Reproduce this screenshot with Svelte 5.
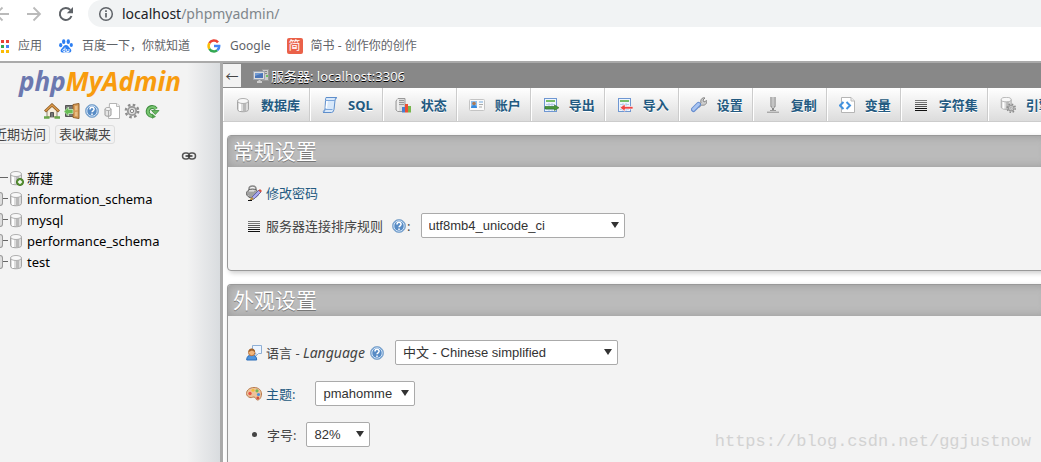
<script>
  const bookmarks = [
    { name: '应用', icon: 'apps' },
    { name: '百度一下，你就知道', icon: 'baidu' },
    { name: 'Google', icon: 'google' },
    { name: '简书 - 创作你的创作', icon: 'jianshu' },
  ];

  const quickLinks = [
    { title: '主页', icon: 'home' },
    { title: '退出', icon: 'exit' },
    { title: 'phpMyAdmin 文档', icon: 'help' },
    { title: '文档', icon: 'docs' },
    { title: '导航面板设置', icon: 'cog' },
    { title: '刷新导航面板', icon: 'reload' },
  ];

  const databases = ['information_schema', 'mysql', 'performance_schema', 'test'];

  const tabs = [
    { name: '数据库', icon: 'db' },
    { name: 'SQL', icon: 'sql' },
    { name: '状态', icon: 'status' },
    { name: '账户', icon: 'users' },
    { name: '导出', icon: 'export' },
    { name: '导入', icon: 'import' },
    { name: '设置', icon: 'wrench' },
    { name: '复制', icon: 'replication' },
    { name: '变量', icon: 'vars' },
    { name: '字符集', icon: 'charset' },
    { name: '引擎', icon: 'engine' },
  ];

  let collation = 'utf8mb4_unicode_ci';
  let language = 'zh_CN';
  let theme = 'pmahomme';
  let fontSize = '82%';
</script>

<svelte:head>
  <title>localhost / phpMyAdmin</title>
</svelte:head>

{#snippet cylinder()}
  <path d="M2.500 4v8.500c0 3 11 3 11 0V4z" fill="#dcdcdc" stroke="#a5a5a5" />
  <path d="M8 6h3v8.500H8z" fill="#b9b9b9" />
  <path d="M4 6h2v8H4z" fill="#fff" />
  <ellipse cx="8" cy="4" rx="5.500" ry="2.500" fill="#f8f8f8" stroke="#b0b0b0" />
{/snippet}

{#snippet gear()}
  <circle cx="8" cy="8" r="6.200" fill="none" stroke="#8c8c8c" stroke-width="2.400" stroke-dasharray="2.500 2.370" />
  <circle cx="8" cy="8" r="4.200" fill="#ddd" stroke="#999" stroke-width="1.800" />
  <circle cx="8" cy="8" r="1.700" fill="#f3f3f3" stroke="#888" />
{/snippet}

{#snippet sheet()}
  <rect x="1.500" y="1.500" width="12" height="13" fill="#eef5fd" stroke="#6f97d2" />
  <path d="M3 4h9" stroke="#75bd68" stroke-width="2" />
  <path d="M3 7.500h9M3 10h9M3 12.500h9M6 6v8M9 6v8" stroke="#b4cbe9" />
{/snippet}

{#snippet icon(name)}
  <svg class="icon" viewBox="0 0 16 16" width="16" height="16" aria-hidden="true">
    {#if name === 'back'}
      <path d="M15 8H2M8.500 1.500 2 8l6.500 6.500" fill="none" stroke="#bababa" stroke-width="1.800" />
    {:else if name === 'forward'}
      <path d="M1 8h13M7.500 1.500 14 8l-6.500 6.500" fill="none" stroke="#bababa" stroke-width="1.800" />
    {:else if name === 'refresh'}
      <path d="M13.500 10A6 6 0 1 1 12.300 3.900" fill="none" stroke="#5f6368" stroke-width="2" />
      <path d="M15 1v6.200H8.800z" fill="#5f6368" />
    {:else if name === 'info'}
      <circle cx="8" cy="8" r="6.300" fill="none" stroke="#5f6368" stroke-width="1.500" />
      <path d="M8 7v4.500M8 4.300V6" stroke="#5f6368" stroke-width="1.700" />
    {:else if name === 'apps'}
      <path d="M2 2h3v3H2zM7 2h3v3H7zM12 2h3v3h-3z" fill="#ea4335" />
      <path d="M2 7h3v3H2zM12 12h3v3h-3zM7 12h3v3H7z" fill="#fbbc05" />
      <path d="M7 7h3v3H7z" fill="#34a853" /><path d="M12 7h3v3h-3z" fill="#4285f4" />
      <path d="M2 12h3v3H2z" fill="#34a853" />
    {:else if name === 'baidu'}
      <g fill="#2d7ff2">
        <ellipse cx="5.700" cy="3.700" rx="1.700" ry="2.400" /><ellipse cx="10.300" cy="3.700" rx="1.700" ry="2.400" />
        <ellipse cx="2.700" cy="7.200" rx="1.600" ry="2.100" /><ellipse cx="13.300" cy="7" rx="1.600" ry="2.100" />
        <path d="M8 7c2 0 2.500 1.800 4 3.200 2.500 2.300 1.200 4.700-1.500 4.300-1.700-.3-3.300-.3-5 0C2.700 14.900 1.500 12.500 4 10.200 5.500 8.800 6 7 8 7z" />
      </g>
      <path d="M7 9.500V13.500H5.500q-1.500-1 0-2.300H7M8.700 11v2.500h2.300V11" fill="none" stroke="#fff" stroke-width=".9" />
    {:else if name === 'google'}
      <g fill="none" stroke-width="2.500">
        <path d="M3.400 5.200A5.200 5.200 0 0 1 12 4.400" stroke="#ea4335" />
        <path d="M3.400 5.200a5.500 5.500 0 0 0 0 5.600" stroke="#fbbc05" />
        <path d="M3.400 10.800a5.300 5.300 0 0 0 7.800 1.500" stroke="#34a853" />
        <path d="M8 8h5.200a5 5 0 0 1-2 4.300" stroke="#4285f4" />
      </g>
    {:else if name === 'home'}
      <path d="M3 7v7h10V7L8 2.500z" fill="#f7edda" stroke="#8e8572" />
      <path d="M6.500 14V9.500h3V14" fill="#777" stroke="#555" />
      <path d="m1 8.500 7-6.500 7 6.500" fill="none" stroke="#8c5c24" stroke-width="3" />
      <path d="m1.500 8 6.500-6 6.500 6" fill="none" stroke="#dc9a4c" stroke-width="1.400" />
      <path d="M0 14.500h5.500M10.500 14.500H16" stroke="#69a749" stroke-width="2.500" />
    {:else if name === 'exit'}
      <path d="M1.500 2.500h8v11h-8z" fill="#777" stroke="#555" />
      <path d="m9 1.500 6-1v15l-6-1z" fill="#d99b55" stroke="#93622d" />
      <path d="m11 3 2.500-.3v4.500L11 7.500zM11 9l2.500-.2v4.500L11 13z" fill="#e9bd84" />
      <path d="M0 8.500 4.500 4v2.500H9v4H4.500V13z" fill="#67bd55" stroke="#d6f2cb" stroke-width=".7" />
    {:else if name === 'help'}
      <circle cx="8" cy="8" r="6.500" fill="#5c92cc" stroke="#8aaccf" />
      <circle cx="8" cy="8" r="5.200" fill="#578bc5" stroke="#d5e5f6" />
      <path d="M6 6.400c0-2.800 4.200-2.700 4.100-.1 0 1.500-2 1.500-2.100 3M8 10.400v1.500" fill="none" stroke="#fff" stroke-width="1.500" />
    {:else if name === 'docs'}
      <path d="M5.500.500H13l2.500 2.500v12.500H4.500z" fill="#fff" stroke="#b5b5b5" />
      <path d="M12.500.500v3h3" fill="#eee" stroke="#bbb" />
      <path d="M1 6v6c0 1.600 6 1.600 6 0V6z" fill="#e5e5e5" stroke="#999" />
      <ellipse cx="4" cy="6" rx="3" ry="1.500" fill="#fafafa" stroke="#aaa" />
      <path d="M4.500 8v5" stroke="#aaa" />
    {:else if name === 'cog'}
      {@render gear()}
    {:else if name === 'reload'}
      <path d="M12 6A4.500 4.500 0 1 0 8.500 13" fill="none" stroke="#3f8d3f" stroke-width="4" />
      <path d="M12 6A4.500 4.500 0 1 0 8.500 13" fill="none" stroke="#78c470" stroke-width="2.200" />
      <path d="M7.500 7.500H15L11.300 11.500z" fill="#66b65f" stroke="#3f8d3f" stroke-width=".8" />
      <path d="m8 10.500 4 3.300-4 2z" fill="#4f9f4b" />
    {:else if name === 'link'}
      <g fill="none" stroke="#555" stroke-width="1.500">
        <rect x="1.500" y="5" width="7" height="6" rx="3" /><rect x="7.500" y="5" width="7" height="6" rx="3" />
      </g>
      <path d="M4.500 8h7" stroke="#333" stroke-width="1.500" />
    {:else if name === 'db'}
      {@render cylinder()}
    {:else if name === 'newdb'}
      {@render cylinder()}
      <circle cx="12" cy="12" r="3.500" fill="#629c3d" stroke="#3f7620" />
      <path d="M12 10v4M10 12h4" stroke="#fff" stroke-width="1.400" />
    {:else if name === 'server'}
      <path d="M9.500 1.500h6v11h-6z" fill="#ccc" stroke="#999" />
      <path d="M11 3.500h3M11 5.500h3" stroke="#888" /><path d="M13 7h2v2h-2z" fill="#6dc265" />
      <path d="M.500 3.500h11v8H.500z" fill="#ddd" stroke="#9da5b1" />
      <path d="M2 5h8v5H2z" fill="#4a75b8" /><path d="M2 5h8L2 8z" fill="#719ad2" />
      <path d="M4 14h5M6.500 12v2" stroke="#ccc" stroke-width="2" />
    {:else if name === 'sql'}
      <path d="M4 .500h11q-2 0-2 3l-1 9q-.5 3-2.500 3H1q2-1 2-3l.5-9Q3.500 1 4 .500z" fill="#d8e8fa" stroke="#5e8ecb" />
      <path d="M4 3.500h9L14.500.700M1 15l1.500-2.500h8" fill="none" stroke="#7ca6db" />
      <path d="m5 4-.7 7" stroke="#fff" stroke-width="1.500" />
    {:else if name === 'status'}
      <path d="M3 1.500 1 4v9l2 1.500h7v-13z" fill="#ddd" stroke="#999" />
      <path d="M4 3.500h5M4 5.500h5M4 7.500h5" stroke="#999" /><path d="M3 2v12" stroke="#fff" />
      <path d="M7 10h3v5.500H7z" fill="#497fd0" /><path d="M10 7h3v8.500h-3z" fill="#ed4e32" /><path d="M13 9h3v6.500h-3z" fill="#76b64d" />
    {:else if name === 'users'}
      <rect x=".500" y="2.500" width="15" height="11" rx="1" fill="#fafafa" stroke="#c4c4c4" />
      <path d="M2 4h6v7H2z" fill="#8ec0ee" /><path d="M2 11c0-4 6-4 6 0z" fill="#378add" />
      <circle cx="5" cy="6.500" r="1.800" fill="#ad7955" />
      <path d="M10 5h4" stroke="#70a7dc" /><path d="M10 7.500h4M10 10h3" stroke="#aaa" />
    {:else if name === 'export'}
      {@render sheet()}
      <path d="M2 9.500h9.500V8L16 10.700l-4.500 2.800V12H2z" fill="#49963b" stroke="#2d7225" stroke-width=".6" />
    {:else if name === 'import'}
      {@render sheet()}
      <path d="M16 9.500H8V7l-5 3.700 5 3.600V12h8z" fill="#ee4543" stroke="#fff" stroke-width=".6" />
    {:else if name === 'wrench'}
      <path d="m7 9 3-3C9 3 11 0 14 1l-2 2 1 2 2.700-1.500C16.200 7 13.500 9 10.500 8L8 10.500z" fill="#ccc" stroke="#888" />
      <path d="m2.500 12.500 5-5" stroke="#668dcf" stroke-width="5" stroke-linecap="round" />
      <path d="m2.500 12.300 5-5" stroke="#a8c4f1" stroke-width="3" stroke-linecap="round" />
    {:else if name === 'replication'}
      <path d="M5 0v9l2.500 3V0zM8.500 0v12L11 9V0z" fill="#999" /><path d="M6 0v9M10 0v9" stroke="#ccc" />
      <path d="M8 11v3" stroke="#888" stroke-width="2" /><path d="M2 15.300h12" stroke="#aaa" stroke-width="1.500" />
      <path d="M5 13.500h6" stroke="#999" />
    {:else if name === 'vars'}
      <path d="M2.500.500H12L15.500 4v11.500h-13z" fill="#fff" stroke="#b5b5b5" /><path d="M12 .500V4h3.500" fill="#eee" stroke="#bbb" />
      <path d="M4.500 5 1 8.500 4.500 12M7.500 5 11 8.500 7.500 12" fill="none" stroke="#4292df" stroke-width="2" />
    {:else if name === 'charset'}
      <path d="M2 3.500h12M2 5.500h12" stroke="#777" /><path d="M2 7.500h12M2 9.500h12" stroke="#555" /><path d="M2 11.500h12M2 13.500h12" stroke="#111" />
    {:else if name === 'engine'}
      <g transform="translate(-1 -1) scale(.9)">{@render cylinder()}</g>
      <g transform="translate(6 6) scale(.65)">{@render gear()}</g>
    {:else if name === 'password'}
      <path d="M3 7V4q0-3 3.500-3T10 4v3" fill="none" stroke="#888" stroke-width="1.500" />
      <ellipse cx="6.500" cy="8.500" rx="6" ry="4.500" fill="#ccc" stroke="#555" />
      <path d="M1.500 7h10M1 9h11M2.500 11h8" stroke="#777" /><path d="M3 6h5" stroke="#eee" />
      <path d="m5 15 1-3 7-7 2 2-7 7z" fill="#a9a9ed" stroke="#6666a6" />
      <path d="m12.500 5.500 2 2L16 6l-2-2z" fill="#d55142" /><path d="m3 15.500 3-3.500 2 2-5 2z" fill="#bd9239" /><path d="M2 15.500h4" stroke="#111" />
    {:else if name === 'language'}
      <path d="M6.500.500h9v8h-3L10 11V8.500H6.500z" fill="#edf5ff" stroke="#8fafd5" />
      <path d="M.700 15q0-5 5-5t5 5z" fill="#4e94df" stroke="#2b6db8" />
      <circle cx="5.700" cy="7.500" r="3.200" fill="#f2b57b" stroke="#b87540" />
      <path d="M2.500 7q0-3.500 3.200-3.500T9 7L6 5.500z" fill="#a0632d" />
    {:else if name === 'palette'}
      <path d="M8 1.500c5 0 7.500 3 7.500 6.500s-2 6-4 6-1.500-3-3.500-3-2 1-4 .5S.500 9.500.500 7.500c0-3.500 3.500-6 7.500-6z" fill="#edc29a" stroke="#b87b4d" />
      <circle cx="4" cy="7.500" r="1.700" fill="#e85545" /><circle cx="7" cy="4.300" r="1.500" fill="#f3bd3a" />
      <circle cx="11" cy="4.800" r="1.600" fill="#75b757" /><circle cx="12.500" cy="8.500" r="1.600" fill="#4d91db" /><circle cx="11.800" cy="12" r="1.400" fill="#d24e3c" />
    {/if}
  </svg>
{/snippet}

<div class="window">
  <header class="browser">
    <div class="toolbar">
      <button title="后退">{@render icon('back')}</button>
      <button title="前进">{@render icon('forward')}</button>
      <button title="重新加载">{@render icon('refresh')}</button>
      <div class="omnibox">
        {@render icon('info')}
        <span class="url"><b>localhost</b>/phpmyadmin/</span>
      </div>
    </div>
    <nav class="bookmarks">
      {#each bookmarks as mark}
        <a href="#top">
          {#if mark.icon === 'jianshu'}
            <span class="jianshu">简</span>
          {:else}
            {@render icon(mark.icon)}
          {/if}
          {mark.name}
        </a>
      {/each}
    </nav>
  </header>

  <div class="workspace">
    <aside>
      <a class="logo" href="#home"><span>php</span>MyAdmin</a>
      <div class="quick">
        {#each quickLinks as item}
          <a href="#{item.icon}" title={item.title}>{@render icon(item.icon)}</a>
        {/each}
      </div>
      <div class="recent">
        <button>近期访问</button>
        <button>表收藏夹</button>
      </div>
      <div class="sync">
        <a href="#link" title="取消与主面板的链接">{@render icon('link')}</a>
      </div>
      <ul class="tree">
        <li><span class="branch"></span>{@render icon('newdb')}<a href="#new">新建</a></li>
        {#each databases as db}
          <li><span class="branch expand"></span>{@render icon('db')}<a href="#{db}">{db}</a></li>
        {/each}
      </ul>
    </aside>

    <main>
      <div class="serverbar">
        <button class="collapse" title="隐藏面板">←</button>
        <a href="#server">{@render icon('server')}服务器: localhost:3306</a>
      </div>
      <nav class="tabs">
        {#each tabs as tab}
          <a href="#{tab.icon}">{@render icon(tab.icon)}{tab.name}</a>
        {/each}
      </nav>

      <section class="panel">
        <h2>常规设置</h2>
        <div class="general">
          <div class="row">
            {@render icon('password')}
            <a href="#password">修改密码</a>
          </div>
          <div class="row">
            {@render icon('charset')}
            <label for="collation">服务器连接排序规则</label>
            <span class="hint">{@render icon('help')}:</span>
            <span class="select collation">
              <select id="collation" bind:value={collation}>
                <option>utf8mb4_unicode_ci</option>
                <option>utf8mb4_general_ci</option>
              </select>
            </span>
          </div>
        </div>
      </section>

      <section class="panel fill">
        <h2>外观设置</h2>
        <div class="appearance">
          <div class="row">
            {@render icon('language')}
            <label for="lang">语言 - <em>Language</em></label>
            {@render icon('help')}
            <span class="select language">
              <select id="lang" bind:value={language}>
                <option value="zh_CN">中文 - Chinese simplified</option>
                <option value="en">English</option>
              </select>
            </span>
          </div>
          <div class="row">
            {@render icon('palette')}
            <label class="theme-label" for="theme"><a href="#theme">主题:</a></label>
            <span class="select theme">
              <select id="theme" bind:value={theme}>
                <option>pmahomme</option>
                <option>original</option>
              </select>
            </span>
          </div>
          <div class="row">
            <span class="bullet"></span>
            <label for="size">字号:</label>
            <span class="select size">
              <select id="size" bind:value={fontSize}>
                <option>82%</option>
                <option>100%</option>
              </select>
            </span>
          </div>
        </div>
      </section>
      <div class="watermark">https://blog.csdn.net/ggjustnow</div>
    </main>
  </div>
</div>

<style>
  :global(body) {
    background: #fff;
  }

  .window {
    display: flex;
    flex-direction: column;
    min-height: 100vh;
    overflow: hidden;
    color: #444;
    font: 13px/20px "Noto Sans", "Noto Sans CJK SC", sans-serif;
  }

  a {
    color: #235a81;
    text-decoration: none;
  }

  button {
    padding: 0;
    border: 0;
    background: none;
    color: inherit;
    font: inherit;
  }

  .icon {
    display: block;
    flex: none;
  }

  /* browser chrome */
  .browser {
    border-bottom: 2px solid #aaa;
  }

  .toolbar {
    display: flex;
    align-items: center;
    gap: 16px;
    height: 27px;
    margin-left: -6px;
  }

  .omnibox {
    display: flex;
    flex: 1;
    align-items: center;
    gap: 8px;
    height: 27px;
    margin-left: -2px;
    padding-left: 10px;
    border-radius: 14px 0 0 14px;
    background: #f1f3f4;
    color: #80868b;
    font-size: 14px;
  }

  .url b {
    color: #202124;
    font-weight: 400;
  }

  .bookmarks {
    display: flex;
    align-items: center;
    gap: 16px;
    height: 34px;
    padding-top: 3px;
    margin-left: -6px;
    box-sizing: border-box;
    font-size: 12px;
  }

  .bookmarks a {
    display: flex;
    align-items: center;
    gap: 8px;
    color: #5f6368;
    white-space: nowrap;
  }

  .jianshu {
    width: 16px;
    height: 16px;
    border-radius: 2px;
    background: #ea6149;
    color: #fff;
    line-height: 16px;
    text-align: center;
  }

  .workspace {
    display: flex;
    flex: 1;
  }

  /* navigation panel */
  aside {
    flex: none;
    width: 220px;
    overflow: hidden;
    border-right: 3px solid #aaa;
    background: linear-gradient(to right, #f3f3f3 85%, #d9dcdf);
  }

  .logo {
    display: block;
    width: 200px;
    height: 40px;
    color: #f89c0e;
    font-size: 26px;
    font-style: italic;
    font-weight: 700;
    line-height: 36px;
    text-align: center;
  }

  .logo span {
    color: #6c78af;
  }

  .quick {
    display: flex;
    gap: 4px;
    padding-left: 44px;
  }

  .recent {
    display: flex;
    gap: 5px;
    margin: 6px 0 0 -10px;
  }

  .recent button {
    padding: 0 3px;
    border: 1px solid #ddd;
    border-radius: 3px;
    background: #f2f2f2;
    line-height: 17px;
    white-space: nowrap;
  }

  .sync {
    display: flex;
    justify-content: flex-end;
    margin: 4px 23px 0 0;
  }

  .tree {
    margin: 3px 0 0;
    padding: 0;
    list-style: none;
  }

  .tree li {
    display: flex;
    align-items: center;
    height: 21px;
  }

  .tree a {
    margin-left: 3px;
    color: #000;
  }

  .branch {
    width: 8px;
    border-top: 1px solid #666;
  }

  .expand {
    display: flex;
    align-items: center;
    height: 14px;
    border: 0;
  }

  .expand::before {
    width: 2px;
    height: 12px;
    border: 1px solid #999;
    border-left: 0;
    border-radius: 0 3px 3px 0;
    background: #ddd;
    content: "";
  }

  .expand::after {
    flex: 1;
    border-top: 1px solid #666;
    content: "";
  }

  /* content */
  main {
    position: relative;
    display: flex;
    flex: 1;
    flex-direction: column;
    min-width: 0;
    overflow: hidden;
  }

  .serverbar {
    display: flex;
    align-items: center;
    gap: 12px;
    height: 25px;
    background: #888;
  }

  .collapse {
    width: 18px;
    height: 23px;
    background: #f2f2f2;
    line-height: 20px;
  }

  .serverbar a {
    display: flex;
    align-items: center;
    gap: 2px;
    color: #fff;
    text-shadow: 0 1px 0 #000;
  }

  .tabs {
    display: flex;
    border-bottom: 1px solid #ccc;
    background: linear-gradient(#fff, #dcdcdc);
  }

  .tabs a {
    display: flex;
    flex: none;
    align-items: center;
    gap: 10px;
    height: 33px;
    padding: 0 9px 0 11px;
    border-right: 1px solid #ccc;
    border-left: 1px solid #fff;
    font-weight: 700;
    text-shadow: 0 1px 0 #fff;
  }

  .panel {
    margin: 13px -8px 0 4px;
    border: 1px solid #999;
    border-radius: 4px;
    background: #f3f3f3;
    box-shadow: 2px 2px 5px #ccc;
  }

  .fill {
    flex: 1;
    border-bottom: 0;
    border-radius: 4px 4px 0 0;
  }

  h2 {
    margin: 0;
    padding-left: 5px;
    border-radius: 3px 3px 0 0;
    background: #bbb;
    box-shadow: inset 0 0 10px #999;
    color: #fff;
    font-size: 21px;
    font-weight: 400;
    line-height: 31px;
    text-shadow: 0 1px 0 #777;
  }

  .general {
    display: grid;
    gap: 8px;
    padding: 13px 18px 32px;
  }

  .appearance {
    display: grid;
    gap: 16px;
    padding: 24px 18px 0;
  }

  .row {
    display: flex;
    align-items: center;
    gap: 4px;
    height: 25px;
    white-space: nowrap;
  }

  .hint {
    display: flex;
    align-items: center;
    margin-left: 4px;
  }

  em {
    font-size: 14px;
  }

  .bullet {
    width: 5px;
    height: 5px;
    margin: 0 6px 0 6px;
    border-radius: 50%;
    background: #444;
  }

  .theme-label {
    margin-right: 10px;
  }

  .select {
    position: relative;
    margin-left: 6px;
  }

  .select::after {
    position: absolute;
    top: 9px;
    right: 6px;
    border: 4px solid transparent;
    border-top: 6px solid #333;
    border-bottom: 0;
    content: "";
    pointer-events: none;
  }

  select {
    display: block;
    width: 100%;
    height: 25px;
    padding: 0 7px;
    border: 1px solid #aaa;
    border-radius: 2px;
    background: #fff;
    color: #333;
    font: 13px "Liberation Sans", "Noto Sans CJK SC", sans-serif;
    appearance: none;
  }

  .collation {
    width: 204px;
  }

  .language {
    width: 223px;
  }

  .theme {
    width: 100px;
  }

  .size {
    width: 64px;
  }

  .watermark {
    position: absolute;
    right: 10px;
    bottom: 10px;
    color: #d2d2d2;
    font-family: "Liberation Mono", monospace;
    font-size: 17px;
  }
</style>
